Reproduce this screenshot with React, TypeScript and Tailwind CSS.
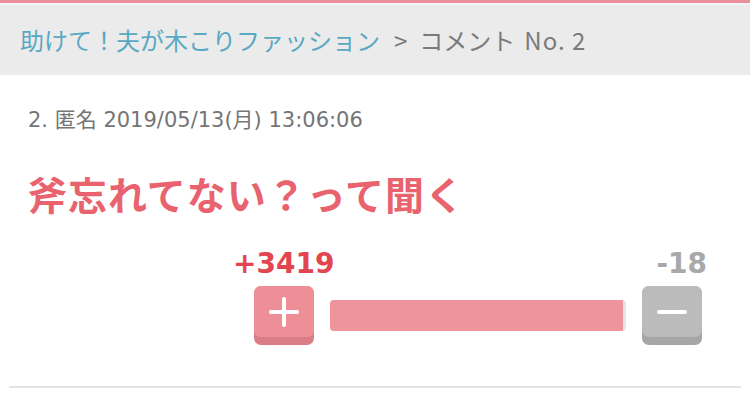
const VoteButton = ({ kind }: { kind: "plus" | "minus" }) => {
  const plus = kind === "plus";
  return (
    <div
      className={`flex h-[59px] w-[60px] items-start justify-center rounded-[7px] ${
        plus ? "bg-[#db7d86]" : "bg-[#a6a6a6]"
      }`}
    >
      <div
        className={`flex h-[51px] w-[60px] items-center justify-center rounded-[7px] ${
          plus ? "bg-[#ee8f98]" : "bg-[#bbbbbb]"
        }`}
      >
        <div className="relative h-[30px] w-[30px]">
          <span className="absolute left-0 top-[13px] h-[4px] w-[30px] rounded-sm bg-white" />
          {plus && (
            <span className="absolute left-[13px] top-0 h-[30px] w-[4px] rounded-sm bg-white" />
          )}
        </div>
      </div>
    </div>
  );
};

export default function App() {
  const up = 3419;
  const down = 18;
  const ratio = (up / (up + down)) * 100;

  return (
    <div className="h-[420px] w-[750px] overflow-hidden bg-white">
      <div className="h-[3px] bg-[#ea909a]" />
      <div className="h-[2px] bg-[#f4f4f4]" />
      <div
        className="flex h-[70px] items-center bg-[#ebebeb] pl-[20px] text-[24px]"
        style={{ fontFamily: "'Noto Sans CJK JP', sans-serif" }}
      >
        <span className="text-[#5aa8c2]">助けて！夫が木こりファッション</span>
        <span className="ml-[14px] text-[#7a7a7a]">&gt;</span>
        <span className="ml-[12px] text-[#7a7a7a]">コメント</span>
        <span className="ml-[9px] tracking-[1px] text-[#7a7a7a]">No. 2</span>
      </div>

      <div className="pl-[28px] pt-[32px]">
        <p
          className="text-[21px] leading-[26px] text-[#757575]"
          style={{ fontFamily: "'DejaVu Sans', 'Noto Sans CJK JP', sans-serif" }}
        >
          2. 匿名 2019/05/13(月) 13:06:06
        </p>
        <h1
          className="mt-[37px] text-[39px] font-bold leading-[46px] tracking-[1px] text-[#e9636f]"
          style={{ fontFamily: "'Noto Sans CJK JP', sans-serif" }}
        >
          斧忘れてない？って聞く
        </h1>
      </div>

      <div className="mt-[33px] flex justify-end pr-[48px]">
        <div className="w-[448px]">
          <div
            className="flex justify-between text-[28px] font-bold leading-[30px]"
            style={{ fontFamily: "'DejaVu Sans', sans-serif" }}
          >
            <span className="-ml-[21px] text-[#e2454f]">+{up}</span>
            <span className="-mr-[5px] text-[#a9a9a9]">-{down}</span>
          </div>
          <div className="mt-[7px] flex items-start gap-[16px]">
            <VoteButton kind="plus" />
            <div className="mt-[14px] h-[31px] flex-1 overflow-hidden rounded-[4px] bg-[#e5e5e5]">
              <div className="h-full bg-[#ee949c]" style={{ width: `${ratio - 0.5}%` }} />
            </div>
            <VoteButton kind="minus" />
          </div>
        </div>
      </div>

      <div className="mx-[9px] mt-[41px] h-[2px] bg-[#e3e3e3]" />
    </div>
  );
}
